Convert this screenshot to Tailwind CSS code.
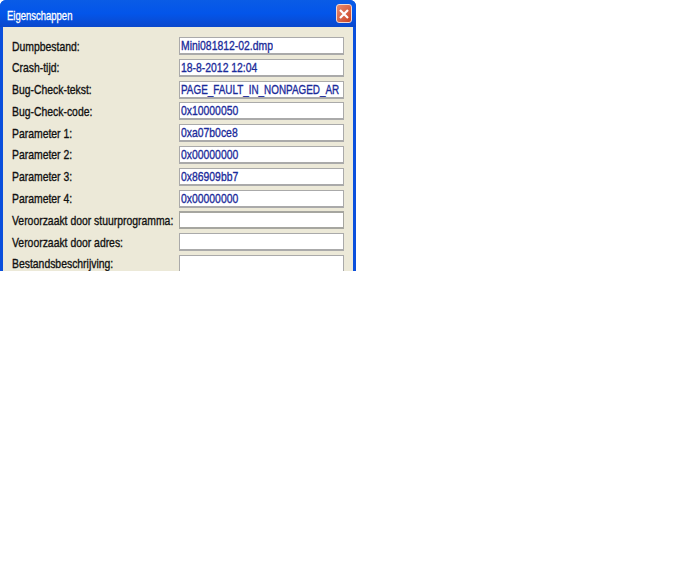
<!DOCTYPE html>
<html lang="nl">
<head>
<meta charset="UTF-8">
<title>Eigenschappen</title>
<script src="https://cdn.jsdelivr.net/npm/@tailwindcss/browser@4"></script>
</head>
<body class="bg-white font-['Liberation_Sans',sans-serif]">
  <div class="w-[356px] h-[271px] overflow-hidden flex flex-col bg-[#0a4fdc] rounded-t-[6px]">
    <!-- title bar -->
    <div class="h-[27px] shrink-0 flex items-center justify-between pl-[7px] pr-[4px] bg-gradient-to-b from-[#0a5ce6] via-[#0355ea] to-[#0a48cc]">
      <span class="block mt-[4px] origin-left scale-x-[.73] whitespace-nowrap text-[13px] leading-[15px] text-white [-webkit-text-stroke:0.3px]">Eigenschappen</span>
      <div class="w-[16px] h-[19px] flex items-center justify-center rounded-[3px] border border-[#f3d8d0] bg-gradient-to-br from-[#e88a70] to-[#c8401f]">
        <svg width="10" height="10" viewBox="0 0 10 10" fill="none" stroke="#fff" stroke-width="2.2"><path d="M1 1l8 8M9 1l-8 8"/></svg>
      </div>
    </div>
    <!-- client area -->
    <div class="flex-1 mx-[3px] bg-[#ece9d8] pl-[9px] pr-[9px] pt-[10px] flex flex-col gap-[3.8px] overflow-hidden">
      <div class="flex items-center h-[18px] shrink-0">
        <div class="w-[167px] shrink-0"><span class="block origin-left scale-x-[.8] whitespace-nowrap text-[13px] leading-[15px] text-[#111] [-webkit-text-stroke:0.35px]">Dumpbestand:</span></div>
        <div class="w-[165px] h-[18px] pl-[1px] flex items-center bg-white border border-[#aaa] border-b-2 overflow-hidden"><span class="block origin-left scale-x-[.8] whitespace-nowrap text-[13px] leading-[15px] text-[#1a2a9a] [-webkit-text-stroke:0.35px]">Mini081812-02.dmp</span></div>
      </div>
      <div class="flex items-center h-[18px] shrink-0">
        <div class="w-[167px] shrink-0"><span class="block origin-left scale-x-[.8] whitespace-nowrap text-[13px] leading-[15px] text-[#111] [-webkit-text-stroke:0.35px]">Crash-tijd:</span></div>
        <div class="w-[165px] h-[18px] pl-[1px] flex items-center bg-white border border-[#aaa] border-b-2 overflow-hidden"><span class="block origin-left scale-x-[.8] whitespace-nowrap text-[13px] leading-[15px] text-[#1a2a9a] [-webkit-text-stroke:0.35px]">18-8-2012 12:04</span></div>
      </div>
      <div class="flex items-center h-[18px] shrink-0">
        <div class="w-[167px] shrink-0"><span class="block origin-left scale-x-[.8] whitespace-nowrap text-[13px] leading-[15px] text-[#111] [-webkit-text-stroke:0.35px]">Bug-Check-tekst:</span></div>
        <div class="w-[165px] h-[18px] pl-[1px] flex items-center bg-white border border-[#aaa] border-b-2 overflow-hidden"><span class="block origin-left scale-x-[.76] whitespace-nowrap text-[13px] leading-[15px] text-[#1a2a9a] [-webkit-text-stroke:0.35px]">PAGE_FAULT_IN_NONPAGED_AR</span></div>
      </div>
      <div class="flex items-center h-[18px] shrink-0">
        <div class="w-[167px] shrink-0"><span class="block origin-left scale-x-[.8] whitespace-nowrap text-[13px] leading-[15px] text-[#111] [-webkit-text-stroke:0.35px]">Bug-Check-code:</span></div>
        <div class="w-[165px] h-[18px] pl-[1px] flex items-center bg-white border border-[#aaa] border-b-2 overflow-hidden"><span class="block origin-left scale-x-[.8] whitespace-nowrap text-[13px] leading-[15px] text-[#1a2a9a] [-webkit-text-stroke:0.35px]">0x10000050</span></div>
      </div>
      <div class="flex items-center h-[18px] shrink-0">
        <div class="w-[167px] shrink-0"><span class="block origin-left scale-x-[.8] whitespace-nowrap text-[13px] leading-[15px] text-[#111] [-webkit-text-stroke:0.35px]">Parameter 1:</span></div>
        <div class="w-[165px] h-[18px] pl-[1px] flex items-center bg-white border border-[#aaa] border-b-2 overflow-hidden"><span class="block origin-left scale-x-[.8] whitespace-nowrap text-[13px] leading-[15px] text-[#1a2a9a] [-webkit-text-stroke:0.35px]">0xa07b0ce8</span></div>
      </div>
      <div class="flex items-center h-[18px] shrink-0">
        <div class="w-[167px] shrink-0"><span class="block origin-left scale-x-[.8] whitespace-nowrap text-[13px] leading-[15px] text-[#111] [-webkit-text-stroke:0.35px]">Parameter 2:</span></div>
        <div class="w-[165px] h-[18px] pl-[1px] flex items-center bg-white border border-[#aaa] border-b-2 overflow-hidden"><span class="block origin-left scale-x-[.8] whitespace-nowrap text-[13px] leading-[15px] text-[#1a2a9a] [-webkit-text-stroke:0.35px]">0x00000000</span></div>
      </div>
      <div class="flex items-center h-[18px] shrink-0">
        <div class="w-[167px] shrink-0"><span class="block origin-left scale-x-[.8] whitespace-nowrap text-[13px] leading-[15px] text-[#111] [-webkit-text-stroke:0.35px]">Parameter 3:</span></div>
        <div class="w-[165px] h-[18px] pl-[1px] flex items-center bg-white border border-[#aaa] border-b-2 overflow-hidden"><span class="block origin-left scale-x-[.8] whitespace-nowrap text-[13px] leading-[15px] text-[#1a2a9a] [-webkit-text-stroke:0.35px]">0x86909bb7</span></div>
      </div>
      <div class="flex items-center h-[18px] shrink-0">
        <div class="w-[167px] shrink-0"><span class="block origin-left scale-x-[.8] whitespace-nowrap text-[13px] leading-[15px] text-[#111] [-webkit-text-stroke:0.35px]">Parameter 4:</span></div>
        <div class="w-[165px] h-[18px] pl-[1px] flex items-center bg-white border border-[#aaa] border-b-2 overflow-hidden"><span class="block origin-left scale-x-[.8] whitespace-nowrap text-[13px] leading-[15px] text-[#1a2a9a] [-webkit-text-stroke:0.35px]">0x00000000</span></div>
      </div>
      <div class="flex items-center h-[18px] shrink-0">
        <div class="w-[167px] shrink-0"><span class="block origin-left scale-x-[.8] whitespace-nowrap text-[13px] leading-[15px] text-[#111] [-webkit-text-stroke:0.35px]">Veroorzaakt door stuurprogramma:</span></div>
        <div class="w-[165px] h-[18px] bg-white border border-[#a6a6a0] border-t-2 border-b-2"></div>
      </div>
      <div class="flex items-center h-[18px] shrink-0">
        <div class="w-[167px] shrink-0"><span class="block origin-left scale-x-[.8] whitespace-nowrap text-[13px] leading-[15px] text-[#111] [-webkit-text-stroke:0.35px]">Veroorzaakt door adres:</span></div>
        <div class="w-[165px] h-[18px] bg-white border border-[#aaa] border-b-2"></div>
      </div>
      <div class="flex items-center h-[18px] shrink-0">
        <div class="w-[167px] shrink-0"><span class="block origin-left scale-x-[.8] whitespace-nowrap text-[13px] leading-[15px] text-[#111] [-webkit-text-stroke:0.35px]">Bestandsbeschrijving:</span></div>
        <div class="w-[165px] h-[18px] bg-white border border-[#aaa] border-b-2"></div>
      </div>
    </div>
  </div>
</body>
</html>
